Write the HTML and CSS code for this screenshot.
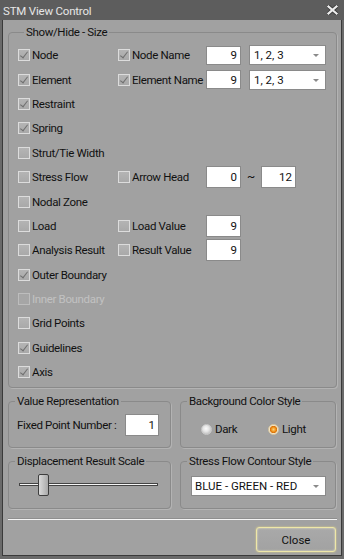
FILE: index.html
```html
<!DOCTYPE html>
<html lang="en">
<head>
  <meta charset="UTF-8" />
  <meta name="viewport" content="width=device-width, initial-scale=1.0"/>
  <title>STM View Control</title>
  <link rel="stylesheet" href="styles.css">
</head>
<body>
  <div class="window">
    <div class="titlebar">
      <span class="title">STM View Control</span>
      <span class="close-x">
        <svg width="11" height="10" viewBox="0 0 11 10">
          <path d="M1.5 1.5 L9.5 8.5 M9.5 1.5 L1.5 8.5" stroke="#3a3a3a" stroke-width="4" stroke-linecap="square"/>
          <path d="M1.5 1.5 L9.5 8.5 M9.5 1.5 L1.5 8.5" stroke="#ececec" stroke-width="2.2" stroke-linecap="square"/>
        </svg>
      </span>
    </div>

    <div class="client">
      <fieldset class="group show-hide">
        <legend>Show/Hide - Size</legend>
        <div class="row">
          <label class="chk col1"><input type="checkbox" checked>Node</label>
          <label class="chk col2"><input type="checkbox" checked>Node Name</label>
          <input class="num" type="text" value="9">
          <span class="combo small"><select><option>1, 2, 3</option></select></span>
        </div>
        <div class="row">
          <label class="chk col1"><input type="checkbox" checked>Element</label>
          <label class="chk col2"><input type="checkbox" checked>Element Name</label>
          <input class="num" type="text" value="9">
          <span class="combo small"><select><option>1, 2, 3</option></select></span>
        </div>
        <div class="row">
          <label class="chk"><input type="checkbox" checked>Restraint</label>
        </div>
        <div class="row">
          <label class="chk"><input type="checkbox" checked>Spring</label>
        </div>
        <div class="row">
          <label class="chk"><input type="checkbox">Strut/Tie Width</label>
        </div>
        <div class="row">
          <label class="chk col1"><input type="checkbox">Stress Flow</label>
          <label class="chk col2"><input type="checkbox">Arrow Head</label>
          <input class="num tall" type="text" value="0">
          <span class="tilde">~</span>
          <input class="num tall" type="text" value="12">
        </div>
        <div class="row">
          <label class="chk"><input type="checkbox">Nodal Zone</label>
        </div>
        <div class="row">
          <label class="chk col1"><input type="checkbox">Load</label>
          <label class="chk col2"><input type="checkbox">Load Value</label>
          <input class="num tall" type="text" value="9">
        </div>
        <div class="row">
          <label class="chk col1"><input type="checkbox">Analysis Result</label>
          <label class="chk col2"><input type="checkbox">Result Value</label>
          <input class="num tall" type="text" value="9">
        </div>
        <div class="row">
          <label class="chk"><input type="checkbox" checked>Outer Boundary</label>
        </div>
        <div class="row">
          <label class="chk disabled"><input type="checkbox" disabled>Inner Boundary</label>
        </div>
        <div class="row">
          <label class="chk"><input type="checkbox">Grid Points</label>
        </div>
        <div class="row">
          <label class="chk"><input type="checkbox" checked>Guidelines</label>
        </div>
        <div class="row">
          <label class="chk"><input type="checkbox" checked>Axis</label>
        </div>
      </fieldset>

      <div class="group-grid">
        <fieldset class="group">
          <legend>Value Representation</legend>
          <div class="fixed-row">
            <span>Fixed Point Number :</span>
            <input class="num tall" type="text" value="1">
          </div>
        </fieldset>

        <fieldset class="group">
          <legend>Background Color Style</legend>
          <div class="radio-row">
            <label class="rad"><input type="radio" name="bg">Dark</label>
            <label class="rad"><input type="radio" name="bg" checked>Light</label>
          </div>
        </fieldset>

        <fieldset class="group">
          <legend>Displacement Result Scale</legend>
          <div class="lower-body">
            <input class="scale" type="range" min="0" max="100" value="14">
          </div>
        </fieldset>

        <fieldset class="group">
          <legend>Stress Flow Contour Style</legend>
          <div class="lower-body">
            <span class="combo wide"><select><option>BLUE - GREEN - RED</option></select></span>
          </div>
        </fieldset>
      </div>

      <div class="separator"></div>

      <div class="footer">
        <button class="close-btn">Close</button>
      </div>
    </div>
  </div>
</body>
</html>
```

FILE: styles.css
```css
body {
  margin: 0;
  font-family: Roboto, "Liberation Sans", sans-serif;
  font-size: 11.5px;
  letter-spacing: -0.35px;
  color: #111;
  background: #6a6a6a;
}

.window {
  width: 344px;
  height: 559px;
  background: #6a6a6a;
}

.titlebar {
  height: 20px;
  background: #5d5d5d;
  display: flex;
  align-items: center;
  justify-content: space-between;
  padding: 1px 6px 0 3px;
  box-sizing: border-box;
}

.title {
  color: #e6e6e6;
  font-size: 11.5px;
  letter-spacing: -0.2px;
}

.close-x {
  display: flex;
  margin-top: -1px;
}

.client {
  margin: 0 2px;
  height: 536px;
  box-sizing: border-box;
  border: 1px solid #3a3a3a;
  border-top: none;
  background: #a1a1a1;
  padding: 5px 4px 0 5px;
}

/* group boxes */
.group {
  margin: 0;
  padding: 4px 0 2px;
  min-width: 0;
  border: 1px solid #8a8a8a;
  border-radius: 4px;
  box-shadow: 1px 1px 0 #b3b3b3;
}

.group legend {
  padding: 0 2px;
  margin-left: 6px;
  line-height: 14px;
  color: #111;
  white-space: nowrap;
}

.show-hide {
  padding-left: 9px;
  padding-bottom: 3px;
}

.row {
  display: flex;
  align-items: center;
  height: 24.4px;
  white-space: nowrap;
}

.col1 {
  width: 100px;
}

.col2 {
  width: 88px;
}

/* checkboxes */
.chk {
  display: flex;
  align-items: center;
  gap: 2px;
}

.chk input {
  appearance: none;
  -webkit-appearance: none;
  position: relative;
  width: 12px;
  height: 12px;
  margin: 0;
  flex: none;
  box-sizing: border-box;
  border: 1px solid #dcdcdc;
  background: linear-gradient(#b4b4b4, #a9a9a9);
}

.chk input:checked::after {
  content: "";
  position: absolute;
  left: 3px;
  top: 0px;
  width: 3px;
  height: 7px;
  border: solid #707070;
  border-width: 0 1.4px 1.4px 0;
  transform: rotate(38deg);
}

.chk.disabled {
  color: #c2c2c2;
}

.chk.disabled input {
  border-color: #bdbdbd;
  background: #a6a6a6;
}

/* text boxes and combos */
.num {
  width: 35px;
  height: 19px;
  margin: 0;
  flex: none;
  box-sizing: border-box;
  border: 1px solid #8a8a8a;
  background: #fff;
  font: inherit;
  color: #111;
  text-align: right;
  padding: 0 3px;
}

.num.tall {
  height: 22px;
}

.tilde {
  width: 20px;
  text-align: center;
  font-size: 12px;
}

.combo {
  position: relative;
  display: flex;
}

.combo select {
  appearance: none;
  -webkit-appearance: none;
  margin: 0;
  height: 20px;
  box-sizing: border-box;
  border: 1px solid #8a8a8a;
  border-radius: 0;
  background: #fff;
  font: inherit;
  color: #111;
  padding: 0 0 0 4px;
}

.combo::after {
  content: "";
  position: absolute;
  right: 7px;
  top: 9px;
  border-left: 3px solid transparent;
  border-right: 3px solid transparent;
  border-top: 3px solid #8a8a8a;
}

.combo.small {
  margin-left: 8px;
}

.combo.small select {
  width: 77px;
}

.combo.wide {
  margin: 2px 0 0 10px;
}

.combo.wide select {
  width: 135px;
  padding-left: 3px;
}

/* lower groups */
.group-grid {
  display: grid;
  grid-template-columns: 163px 156px;
  column-gap: 9px;
  row-gap: 6px;
  margin-top: 6px;
}

.fixed-row {
  display: flex;
  align-items: center;
  justify-content: space-between;
  padding: 2px 11px 9px 8px;
  white-space: nowrap;
}

.fixed-row .num {
  width: 34px;
}

.radio-row {
  display: flex;
  align-items: center;
  padding: 6px 0 0 20px;
  height: 22px;
}

.rad {
  display: flex;
  align-items: center;
  gap: 3px;
  width: 72px;
}

.rad input {
  appearance: none;
  -webkit-appearance: none;
  width: 11px;
  height: 11px;
  margin: 0;
  border-radius: 50%;
  border: 1px solid #c8c8c8;
  box-sizing: border-box;
  background: radial-gradient(circle at 45% 40%, #fbfbfb 0, #e4e4e4 3px, #c9c9c9 5px);
}

.rad input:checked {
  border-color: #d9c9a0;
  background: radial-gradient(circle at 50% 50%, #ffd27a 0, #ea8a12 2.5px, #d8700a 3.3px, #f6e2c0 4px, #e2e2e2 5px);
}

.lower-body {
  height: 34px;
  box-sizing: border-box;
  padding: 0 0 9px;
  display: flex;
  align-items: center;
}

.scale {
  -webkit-appearance: none;
  appearance: none;
  width: 139px;
  height: 22px;
  margin: 0 0 0 10px;
  background: transparent;
}

.scale::-webkit-slider-runnable-track {
  height: 3px;
  border: 1px solid #444;
  background: #f6f6f6;
}

.scale::-webkit-slider-thumb {
  -webkit-appearance: none;
  width: 11px;
  height: 22px;
  margin-top: -10px;
  box-sizing: border-box;
  border: 1px solid #3e3e3e;
  border-radius: 2px;
  background: linear-gradient(90deg, #dadada, #a9a9a9);
}

.separator {
  margin-top: 9px;
  height: 1px;
  background: #f4f4f4;
  border-top: 1px solid #8e8e8e;
}

.footer {
  display: flex;
  justify-content: flex-end;
  margin-top: 7px;
  padding-right: 1px;
}

.close-btn {
  width: 80px;
  height: 25px;
  font: inherit;
  color: #111;
  background: linear-gradient(#a9a9a9, #a2a2a2);
  border: 1px solid #eee7a8;
  border-radius: 3px;
  box-shadow: 0 0 2px #e8d880, inset 0 0 2px #f6f0c8;
}
```
